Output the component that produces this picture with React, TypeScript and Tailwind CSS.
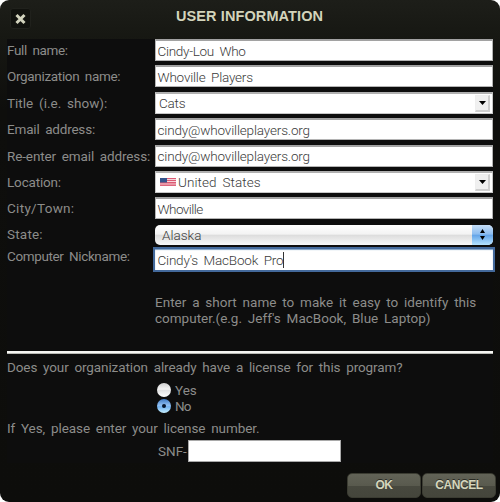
import type { ReactNode } from "react";

const labelText =
  "whitespace-nowrap font-['Roboto',sans-serif] text-[13.5px] leading-[16px] text-[#8c8c8a] [word-spacing:2.5px]";
const valueText =
  "whitespace-nowrap font-['Roboto',sans-serif] text-[13.5px] font-light leading-[16px] text-[#3a3a3a] [word-spacing:2.5px]";

function Row({
  label,
  spacing,
  height = "h-[26.4px]",
  offset = "pt-[3px]",
  children,
}: {
  label: string;
  spacing: string;
  height?: string;
  offset?: string;
  children: ReactNode;
}) {
  return (
    <div className={`flex items-start ${height}`}>
      <div className={`w-[148px] shrink-0 ${offset} ${labelText} ${spacing}`}>{label}</div>
      {children}
    </div>
  );
}

function Field({ children }: { children: ReactNode }) {
  return (
    <div className="flex h-[22px] w-[338px] items-center border border-t-2 border-[#b4b4b4] border-t-[#a2a2a2] bg-white pl-[1.5px]">
      {children}
    </div>
  );
}

function Dropdown({ children }: { children: ReactNode }) {
  return (
    <div className="flex h-[22px] w-[338px] items-center border border-t-2 border-[#c8c8c8] border-t-[#b0b0b0] bg-white pl-[3px] pr-[2px]">
      {children}
      <div className="ml-auto flex h-[17px] w-[15px] items-center justify-center border border-b-2 border-r-2 border-[#eeeeee] border-b-[#cfcfcf] border-r-[#cfcfcf] bg-[#f0f0f0]">
        <svg width="7" height="4" viewBox="0 0 7 4">
          <path d="M0 0H7L3.5 4Z" fill="#000" />
        </svg>
      </div>
    </div>
  );
}

function Flag() {
  return (
    <svg className="ml-[1px] mr-[2px] shrink-0" width="16" height="8" viewBox="0 0 16 8">
      <rect width="16" height="8" fill="#f7d5db" />
      <path d="M0 .5H16M0 2.5H16M0 4.5H16M0 6H16M0 7.6H16" stroke="#d84d68" strokeWidth=".9" />
      <rect width="7" height="4.5" fill="#35558d" />
    </svg>
  );
}

function ActionButton({ children, width }: { children: ReactNode; width: string }) {
  return (
    <button
      className={`h-[25px] ${width} rounded-[5px] border border-[#3b3c32] bg-[linear-gradient(#626357_0%,#595a4e_50%,#47483e_54%,#45463c_100%)] font-['Liberation_Sans',sans-serif] text-[12px] font-bold leading-[23px] tracking-[-0.4px] text-[#d5d6bd] [text-shadow:0_-1px_0_#2b2c25]`}
    >
      {children}
    </button>
  );
}

export default function App() {
  return (
    <div className="h-[502px] w-[500px] overflow-hidden bg-white">
      <div className="flex h-[502px] w-[500px] flex-col overflow-hidden rounded-[9px] bg-[#0d0d0c] bg-[linear-gradient(#1d1e19_0px,#171813_34px,#0e0e0c_110px,#0d0d0b_100%)]">
        <header className="flex h-[39px] shrink-0 items-start pl-[10px] pt-[7px]">
          <div className="mt-[1px] flex h-[21px] w-[21px] items-center justify-center rounded-[3px] border border-[#20211c] bg-[#11120e]">
            <svg width="11" height="12" viewBox="0 0 11 12">
              <path d="M1.5 2L9.5 10M9.5 2L1.5 10" stroke="#d2d3bd" strokeWidth="3" />
            </svg>
          </div>
          <h1 className="ml-[145px] whitespace-nowrap font-['Liberation_Sans',sans-serif] text-[14.5px] font-bold leading-[19px] tracking-[0.1px] text-[#d3d4bb]">
            USER INFORMATION
          </h1>
        </header>

        <main className="mx-[7px] h-[424px] bg-[#0d0d0d]">
          <Row label="Full name:" spacing="tracking-[-0.35px]">
            <Field><span className={`${valueText} tracking-[-0.3px]`}>Cindy-Lou Who</span></Field>
          </Row>
          <Row label="Organization name:" spacing="tracking-[-0.33px]">
            <Field><span className={`${valueText} tracking-[-0.2px]`}>Whoville Players</span></Field>
          </Row>
          <Row label="Title (i.e. show):" spacing="tracking-[0px]">
            <Dropdown><span className={`${valueText} tracking-[-0.2px]`}>Cats</span></Dropdown>
          </Row>
          <Row label="Email address:" spacing="tracking-[-0.19px]">
            <Field><span className={`${valueText} tracking-[-0.16px]`}>cindy@whovilleplayers.org</span></Field>
          </Row>
          <Row label="Re-enter email address:" spacing="tracking-[-0.12px]">
            <Field><span className={`${valueText} tracking-[-0.16px]`}>cindy@whovilleplayers.org</span></Field>
          </Row>
          <Row label="Location:" spacing="tracking-[-0.17px]">
            <Dropdown><Flag /><span className={`${valueText} tracking-[0.07px]`}>United States</span></Dropdown>
          </Row>
          <Row label="City/Town:" spacing="tracking-[0.3px]">
            <Field><span className={`${valueText} tracking-[-0.55px]`}>Whoville</span></Field>
          </Row>
          <Row label="State:" spacing="tracking-[0.2px]" height="h-[23.2px]" offset="pt-[2px]">
            <div className="mt-[1px] flex h-[20px] w-[338px] items-center overflow-hidden rounded-[5px] bg-[linear-gradient(#ffffff_0%,#f3f3f3_45%,#dddddd_52%,#f8f8f8_100%)] pl-[7px]">
              <span className={valueText}>Alaska</span>
              <div className="ml-auto flex h-[20px] w-[21px] flex-col items-center justify-center gap-[3px] bg-[linear-gradient(#c5def8_0%,#8dbdf0_45%,#65a5e9_52%,#b5e4ff_100%)]">
                <svg width="5" height="4" viewBox="0 0 5 4"><path d="M0 4H5L2.5 0Z" /></svg>
                <svg width="5" height="4" viewBox="0 0 5 4"><path d="M0 0H5L2.5 4Z" /></svg>
              </div>
            </div>
          </Row>
          <Row label="Computer Nickname:" spacing="tracking-[-0.37px]" height="h-[47.5px]" offset="pt-[1px]">
            <div className="mt-[2px] flex h-[21px] w-[338px] items-center bg-white pl-[2.5px] pt-[1px] shadow-[0_0_0_2px_#43699b,inset_0_1px_1px_#7e9fc4]">
              <span className={`${valueText} tracking-[-0.2px]`}>Cindy's MacBook Pro</span>
              <span className="h-[16px] w-px bg-[#333]" />
            </div>
          </Row>
          <div className={`ml-[148px] h-[56.5px] ${labelText}`}>
            <p>Enter a short name to make it easy to identify this</p>
            <p>computer.(e.g. Jeff's MacBook, Blue Laptop)</p>
          </div>
          <div className="h-[3px] w-[486px] border-b border-[#b9bab5] bg-[#f5f5f2]" />
          <p className={`mt-[5px] tracking-[-0.1px] ${labelText}`}>Does your organization already have a license for this program?</p>
          <div className="ml-[150px] mt-[7px]">
            <div className="flex h-[16px] items-center gap-[4px]">
              <span className="h-[14px] w-[14px] rounded-full bg-[linear-gradient(#cfcfcf,#f4f4f4_45%,#dfdfdf_50%,#ffffff)]" />
              <span className={labelText}>Yes</span>
            </div>
            <div className="flex h-[16px] items-center gap-[4px]">
              <span className="flex h-[14px] w-[14px] items-center justify-center rounded-full bg-[linear-gradient(#3f79c3,#91c0f4_45%,#72b1f0_55%,#c5efff)]">
                <span className="h-[4px] w-[4px] rounded-full bg-[#07152c]" />
              </span>
              <span className={`${labelText} tracking-[-1px]`}>No</span>
            </div>
          </div>
          <p className={`mt-[6px] tracking-[-0.07px] ${labelText}`}>If Yes, please enter your license number.</p>
          <div className="ml-[151px] mt-[4px] flex h-[22px] items-center">
            <span className={`w-[30px] ${labelText}`}>SNF-</span>
            <div className="h-[22px] w-[153px] border border-[#a9a9a9] bg-white" />
          </div>
        </main>
        <footer className="flex justify-end gap-[1px] pr-[4px] pt-[10px]">
          <ActionButton width="w-[74px]">OK</ActionButton>
          <ActionButton width="w-[74px]">CANCEL</ActionButton>
        </footer>
      </div>
    </div>
  );
}
